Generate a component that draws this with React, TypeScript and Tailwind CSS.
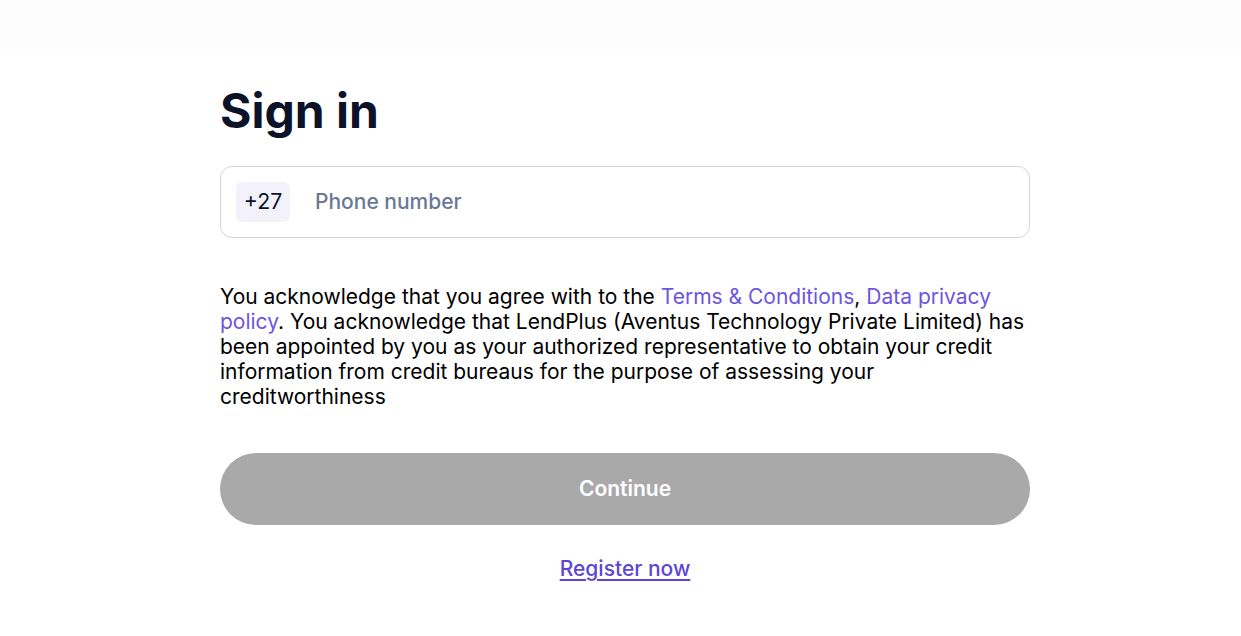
export default function App() {
  return (
    <div
      className="min-h-screen bg-white"
      style={{ fontFamily: "Inter, 'Noto Sans', sans-serif" }}
    >
      <header className="h-[49px] bg-[#fdfdfd]" />
      <div className="ml-[220px] w-[810px] pt-[31px]">
        <h1 className="text-[48px] font-bold leading-[62px] text-[#0c1228]">Sign in</h1>

        <div className="mt-[24px] flex h-[72px] items-center rounded-[12px] border border-[#d4d4d8] px-[15px]">
          <span className="flex h-[40px] w-[54px] items-center justify-center rounded-[6px] bg-[#f3f2fb] text-[21.3px] text-[#0c1228]">
            +27
          </span>
          <input
            className="ml-[25px] flex-1 bg-transparent text-[21px] font-medium text-[#0c1228] outline-none placeholder:text-[#6b7794]"
            placeholder="Phone number"
          />
        </div>

        <p className="mt-[46px] text-[21px] leading-[25px] text-black">
          You acknowledge that you agree with to the{" "}
          <a className="text-[#6c55e0]">Terms &amp; Conditions</a>,{" "}
          <a className="text-[#6c55e0]">Data privacy policy</a>. You acknowledge that LendPlus
          (Aventus Technology Private Limited) has been appointed by you as your authorized
          representative to obtain your credit information from credit bureaus for the purpose
          of assessing your creditworthiness
        </p>

        <button className="mt-[44px] flex h-[72px] w-full items-center justify-center rounded-full bg-[#a9a9a9] text-[21px] font-semibold text-white">
          Continue
        </button>

        <div className="mt-[28px] text-center">
          <a className="text-[21px] font-medium text-[#5b46d6] underline decoration-2 underline-offset-[3px]">
            Register now
          </a>
        </div>
      </div>
    </div>
  );
}
